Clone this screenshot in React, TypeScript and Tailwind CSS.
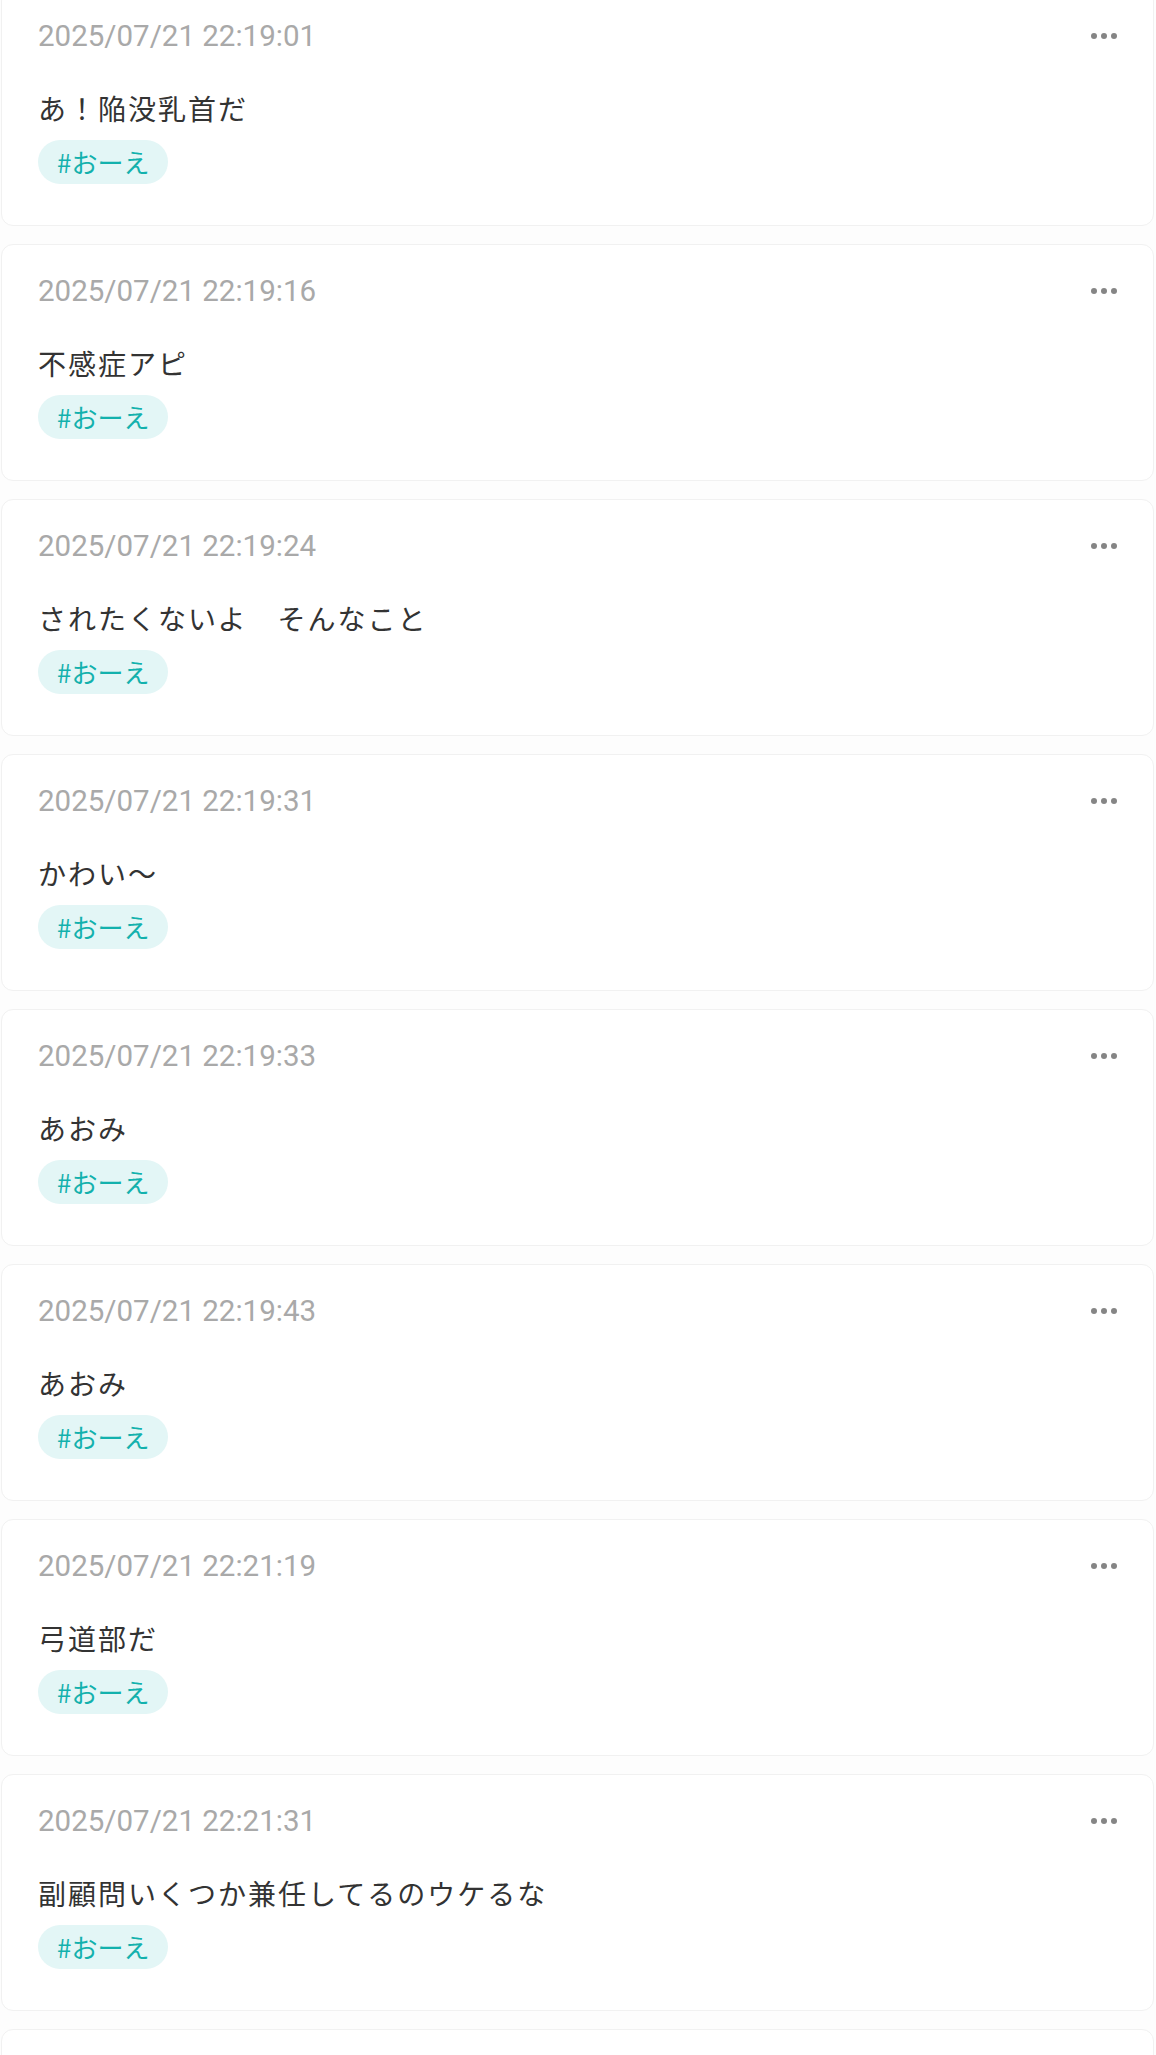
import React from "react";

const posts = [
  { id: 1, date: "2025/07/21 22:19:01", body: "あ！陥没乳首だ", tag: "おーえ" },
  { id: 2, date: "2025/07/21 22:19:16", body: "不感症アピ", tag: "おーえ" },
  { id: 3, date: "2025/07/21 22:19:24", body: "されたくないよ　そんなこと", tag: "おーえ" },
  { id: 4, date: "2025/07/21 22:19:31", body: "かわい〜", tag: "おーえ" },
  { id: 5, date: "2025/07/21 22:19:33", body: "あおみ", tag: "おーえ" },
  { id: 6, date: "2025/07/21 22:19:43", body: "あおみ", tag: "おーえ" },
  { id: 7, date: "2025/07/21 22:21:19", body: "弓道部だ", tag: "おーえ" },
  { id: 8, date: "2025/07/21 22:21:31", body: "副顧問いくつか兼任してるのウケるな", tag: "おーえ" },
  { id: 9, date: "2025/07/21 22:21:40", body: "", tag: "おーえ" },
];

const MoreButton = () => (
  <button className="flex items-center gap-[4px] h-9 px-1 -mr-1">
    <span className="block w-[6px] h-[6px] rounded-full bg-[#858585]" />
    <span className="block w-[6px] h-[6px] rounded-full bg-[#858585]" />
    <span className="block w-[6px] h-[6px] rounded-full bg-[#858585]" />
  </button>
);

const PostCard = ({ post }) => {
  return (
    <div className="bg-white border border-[#f1f1f1] rounded-[12px] pt-[28px] pb-[41px] px-[36px]">
      <div className="flex justify-between items-center h-9">
        <span
          className="text-[29.5px] leading-9 text-[#a9a9a9]"
          style={{ fontFamily: "Roboto, 'Noto Sans CJK JP', sans-serif" }}
        >
          {post.date}
        </span>
        <MoreButton />
      </div>
      <p className="mt-[34px] text-[28px] leading-10 tracking-[2px] text-[#333333] whitespace-pre">
        {post.body}
      </p>
      <div className="mt-3 flex">
        <span className="h-11 px-[19px] rounded-full bg-[#e3f6f6] text-[#13b1ad] text-[26px] leading-[44px]">
          #{post.tag}
        </span>
      </div>
    </div>
  );
};

export default function App() {
  return (
    <div
      className="min-h-screen bg-[#fdfdfd] overflow-hidden"
      style={{ fontFamily: "'Noto Sans CJK JP', 'Noto Sans', sans-serif" }}
    >
      <div className="-mt-[11px] pl-px pr-[2px] flex flex-col gap-[18px]">
        {posts.map((post) => (
          <PostCard key={post.id} post={post} />
        ))}
      </div>
    </div>
  );
}
